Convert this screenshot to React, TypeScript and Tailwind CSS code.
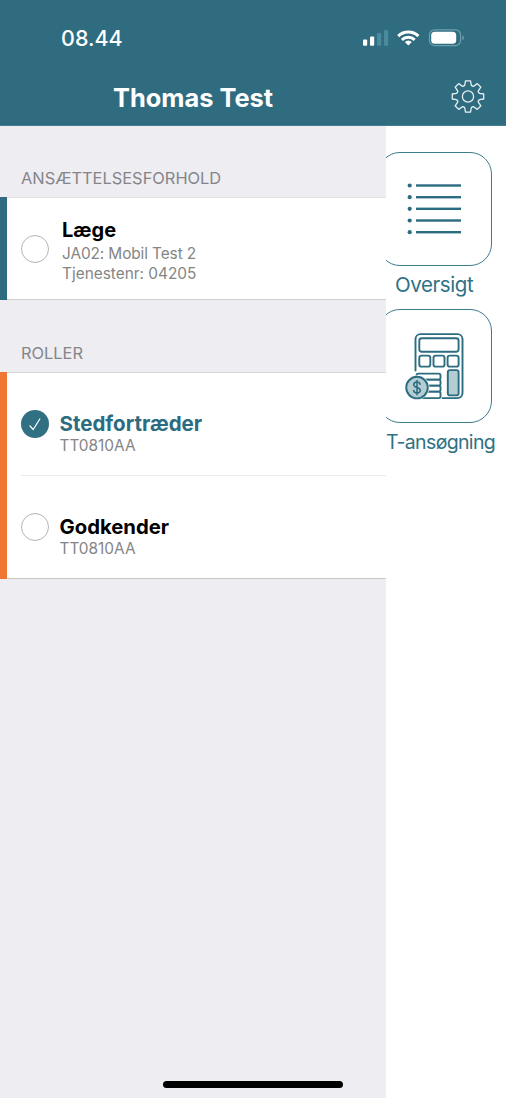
import type { ReactNode } from "react";
import clsx from "clsx";

const TEAL = "#2c6c80";

// Outline of the eight-toothed settings gear, centred on 0,0
function gearPath() {
  const tooth = [
    [-3.2, -11.6],
    [-2.5, -15.7],
    [2.5, -15.7],
    [3.2, -11.6],
  ];
  let d = "";
  for (let i = 0; i < 8; i++) {
    const a = (i * Math.PI) / 4;
    const pts = tooth.map(([x, y]) => [
      (x * Math.cos(a) - y * Math.sin(a)).toFixed(2),
      (x * Math.sin(a) + y * Math.cos(a)).toFixed(2),
    ]);
    if (i === 0) {
      d += `M${pts[0].join(" ")}`;
    } else {
      const v = a - Math.PI / 8;
      d += `Q${(10.6 * Math.sin(v)).toFixed(2)} ${(-10.6 * Math.cos(v)).toFixed(2)} ${pts[0].join(" ")}`;
    }
    d += pts.slice(1).map((p) => `L${p.join(" ")}`).join("");
  }
  const v = -Math.PI / 8;
  return `${d}Q${(10.6 * Math.sin(v)).toFixed(2)} ${(-10.6 * Math.cos(v)).toFixed(2)} -3.2 -11.6Z`;
}

function GearIcon() {
  return (
    <svg width="34" height="34" viewBox="-17 -16.5 34 34" fill="none" stroke="#e6eff2" strokeWidth="1.3" strokeLinejoin="round">
      <path d={gearPath()} />
      <circle r="5.6" />
    </svg>
  );
}

function StatusIcons() {
  return (
    <svg width="103" height="20" viewBox="0 0 103 20">
      {/* Signal */}
      <g fill="#fff">
        <rect x="1" y="11.5" width="4.2" height="6.2" rx="1" />
        <rect x="8" y="8.5" width="4.2" height="9.2" rx="1" />
      </g>
      <g fill="#4b8a9b">
        <rect x="15" y="5" width="4.2" height="12.7" rx="1" />
        <rect x="22" y="2" width="4.2" height="15.7" rx="1" />
      </g>
      {/* Wifi */}
      <g fill="none" stroke="#fff" strokeWidth="3">
        <path d="M36.2 8.1a14.6 14.6 0 0 1 20.2 0" />
        <path d="M39.9 11.9a9.3 9.3 0 0 1 12.8 0" />
      </g>
      <path d="M42.8 14.1a5.2 5.2 0 0 1 7 0l-3.5 3.5z" fill="#fff" />
      {/* Battery */}
      <rect x="67.5" y="1.8" width="31" height="15.8" rx="5" fill="none" stroke="#6c9eac" strokeWidth="1.2" />
      <rect x="69.2" y="3.7" width="25" height="12" rx="3.5" fill="#fff" />
      <path d="M100.3 7.2c2.2.8 2.2 4.2 0 5z" fill="#6c9eac" />
    </svg>
  );
}

function ListIcon() {
  return (
    <svg width="58" height="54" viewBox="0 0 58 54" fill={TEAL}>
      {[3.5, 15.2, 26.8, 38.5, 50.2].map((y) => (
        <g key={y}>
          <circle cx="3.7" cy={y} r="2.1" />
          <rect x="10" y={y - 1.2} width="45" height="2.4" />
        </g>
      ))}
    </svg>
  );
}

function CalculatorIcon() {
  return (
    <svg width="60" height="68" viewBox="0 -0.6 60 68" fill="none" stroke={TEAL} strokeWidth="1.9" strokeLinejoin="round" strokeLinecap="round">
      <path d="M10.5 38V6.5a5 5 0 0 1 5-5h37a5 5 0 0 1 5 5v54a5 5 0 0 1-5 5h-15" />
      <rect x="14.3" y="5.6" width="39.3" height="13.6" rx="2.5" />
      <rect x="14.3" y="23" width="11" height="11" rx="2.2" />
      <rect x="28.5" y="23" width="11" height="11" rx="2.2" />
      <rect x="42.6" y="23" width="11" height="11" rx="2.2" />
      <rect x="42.8" y="37.5" width="10.8" height="25.3" rx="2.2" fill="#b3cdd3" />
      {/* Coin stack */}
      <rect x="11.5" y="41" width="24" height="6" rx="1.8" />
      <rect x="13.5" y="47" width="22" height="6" rx="1.8" />
      <rect x="13.5" y="53" width="22" height="6" rx="1.8" />
      <rect x="11.5" y="59" width="24" height="6.5" rx="1.8" />
      <circle cx="12" cy="55" r="12.4" fill="#fff" stroke="none" />
      <circle cx="12" cy="55" r="10.8" fill="#b3cdd3" />
      <path d="M15.2 51.7c-.5-1.6-1.7-2.2-3.2-2.2-1.9 0-3.2 1-3.2 2.6 0 3.7 6.5 1.9 6.5 5.6 0 1.7-1.4 2.7-3.3 2.7-1.8 0-3.1-.9-3.4-2.6M12 47.8v14.4" strokeWidth="1.5" />
    </svg>
  );
}

function Radio({ checked }: { checked?: boolean }) {
  if (!checked) {
    return <span className="size-7 shrink-0 rounded-full border-[1.5px] border-[#b4b4b4] bg-white" />;
  }
  return (
    <span className="flex size-7 shrink-0 items-center justify-center rounded-full bg-[#317083]">
      <svg width="12" height="13" viewBox="0 0 12 13" fill="none" stroke="#fff" strokeWidth="1.2" strokeLinecap="round">
        <path d="M1 8l3.2 3.5L10.8 1" />
      </svg>
    </span>
  );
}

function SectionTitle({ children, className }: { children: ReactNode; className?: string }) {
  return (
    <h2 className={clsx("flex items-end pl-[21px] text-[16.4px] leading-5 text-[#858589]", className)}>
      {children}
    </h2>
  );
}

function Tile({ label, children, labelClass }: { label: string; children: ReactNode; labelClass: string }) {
  return (
    <div className="h-[157px]">
      <div className="-ml-2 flex h-[114px] w-[114px] items-center justify-center rounded-[22px] border-[1.5px] border-[#3d7c8d]">
        {children}
      </div>
      <div className={clsx("mt-[5px] leading-7 whitespace-nowrap text-[#2f7184]", labelClass)}>{label}</div>
    </div>
  );
}

export default function App() {
  return (
    <div className="flex h-[1098px] w-[506px] flex-col overflow-hidden bg-white font-['Inter',sans-serif]">
      <header className="h-[126px] border-b border-[#3f7f91] bg-[#2f6c80] text-white">
        <div className="flex h-[76px] items-center justify-between pr-[41px] pl-[61px]">
          <span className="text-[21.5px] font-medium">08.44</span>
          <StatusIcons />
        </div>
        <div className="flex h-[42px] items-center justify-between pr-[21px] pl-[113px]">
          <h1 className="pt-[3px] text-[25.4px] font-bold">Thomas Test</h1>
          <GearIcon />
        </div>
      </header>

      <div className="flex flex-1">
        <aside className="relative w-[386px] bg-[#eeedf2]">
          <SectionTitle className="h-[71px] pb-[9px]">ANSÆTTELSESFORHOLD</SectionTitle>
          <section className="flex h-[103px] border-y border-t-[#e2e1e5] border-b-[#d0d0d3] bg-white">
            <div className="-my-px w-[6.5px] bg-[#2f6c80]" />
            <div className="flex items-center gap-[13px] pl-[14.5px]">
              <Radio />
              <div className="pt-0.5 text-[15.4px] leading-5 text-[#858585]">
                <p className="text-[20px] leading-7 font-bold text-black">Læge</p>
                <p className="tracking-[-0.1px]">JA02: Mobil Test 2</p>
                <p>Tjenestenr: 04205</p>
              </div>
            </div>
          </section>

          <SectionTitle className="h-[72px] pb-[9px]">ROLLER</SectionTitle>
          <section className="flex h-[207px] border-y border-t-[#d6d5d9] border-b-[#c8c8cb] bg-white">
            <div className="-my-px w-[6.5px] bg-[#ee7733]" />
            <div className="ml-[14.5px] flex-1">
              <div className="flex h-[103px] gap-[10.5px] border-b border-[#ebebeb] pt-[37px]">
                <Radio checked />
                <div>
                  <p className="text-[20.5px] leading-7 font-bold text-[#2b6c80]">Stedfortræder</p>
                  <p className="text-[15.4px] leading-4 text-[#858585]">TT0810AA</p>
                </div>
              </div>
              <div className="flex gap-[10.5px] pt-[37px]">
                <Radio />
                <div>
                  <p className="text-[20.3px] leading-7 font-bold text-black">Godkender</p>
                  <p className="text-[15.4px] leading-4 text-[#858585]">TT0810AA</p>
                </div>
              </div>
            </div>
          </section>

          {/* Home indicator */}
          <div className="absolute bottom-[10px] left-[163px] h-[7px] w-[180px] rounded-full bg-black" />
        </aside>

        <main className="flex-1 overflow-hidden pt-[26px]">
          <Tile label="Oversigt" labelClass="pl-[9px] text-[20.5px] tracking-[-0.4px]">
            <ListIcon />
          </Tile>
          <Tile label="T-ansøgning" labelClass="text-[19.5px] tracking-[-0.65px]">
            <CalculatorIcon />
          </Tile>
        </main>
      </div>
    </div>
  );
}
